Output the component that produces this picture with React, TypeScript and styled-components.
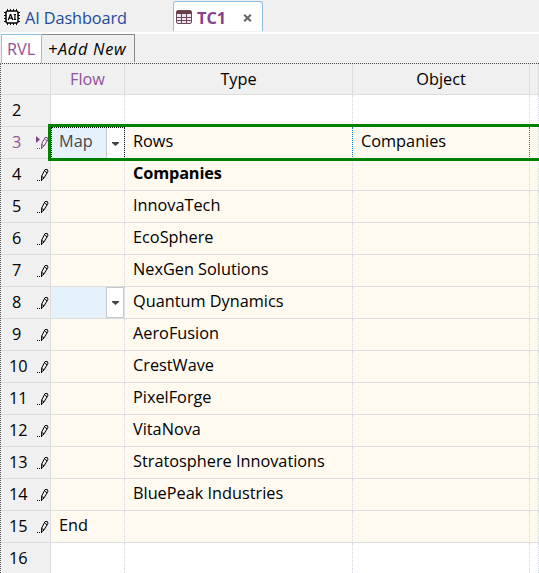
import React from 'react';
import styled, { createGlobalStyle, css } from 'styled-components';

const Global = createGlobalStyle`
  * { box-sizing: border-box; }
  html, body { margin: 0; overflow: hidden; }
  body { background: #f0f0f0; color: #000; font: 16.3px/22px "Open Sans", "Noto Sans", sans-serif; }
`;

const Window = styled.div`
  width: 539px;
  height: 573px;
  overflow: hidden;
  display: flex;
  flex-direction: column;
  white-space: nowrap;
`;

const DocumentTabs = styled.div`
  display: flex;
  height: 34px;
  flex: none;
  border-bottom: 2px solid #fff;
`;

const DashboardTab = styled.div`
  display: flex;
  width: 173px;
  padding: 7px 0 0 4px;
  gap: 5px;
  color: #244a9b;
  svg { flex: none; background: #fff; margin-top: 2px; }
`;

const ActiveTab = styled.div`
  display: flex;
  width: 90px;
  height: 30px;
  margin-top: 1px;
  padding: 5px 0 0 2px;
  background: #fff;
  border: 1px solid #8fbfe0;
  border-bottom: 0;
  border-radius: 3px 3px 0 0;
  color: #84418c;
  font-weight: 700;
  > svg { flex: none; margin-top: 3px; }
`;

const Label = styled.span<{ $spacing?: number }>`
  letter-spacing: ${p => p.$spacing ?? 0}px;
`;

const SheetTabs = styled.div`
  display: flex;
  height: 29px;
  flex: none;
  padding-left: 1px;
`;

const SheetTab = styled.div<{ $selected?: boolean }>`
  height: 29px;
  padding: 3px 0 0 5px;
  ${p => p.$selected
    ? css`width: 41px; background: #fff; color: #91539a; border: 1px solid #8fc3e4; border-bottom: 0;`
    : css`width: 93px; height: 28px; color: #000; font-style: italic; border: solid #888; border-width: 1px 1px 0 0; padding-left: 6px;`}
`;

const Grid = styled.div`
  position: relative;
  flex: 1;
  border-top: 1px dotted #444;
  border-left: 1px dotted #555;
`;

const Row = styled.div<{ $header?: boolean; $filled?: boolean }>`
  display: grid;
  grid-template-columns: 50px 74px 228px 177px 9px;
  height: ${p => (p.$header ? 31 : 32)}px;
  background: ${p => (p.$header ? '#f0f0f0' : p.$filled ? '#fffaf0' : '#fff')};
`;

const Cell = styled.div<{ $header?: boolean; $active?: boolean; $bold?: boolean }>`
  display: flex;
  border-bottom: 1px solid #dcdcdc;
  border-right: 1px ${p => (p.$header ? 'solid #dcdcdc' : p.$active ? 'dotted #0878d0' : 'dotted #d0d4df')};
  padding: ${p => (p.$header ? '4px 0 0' : '3px 0 0 8px')};
  justify-content: ${p => (p.$header ? 'center' : 'flex-start')};
  font-weight: ${p => (p.$bold ? 700 : 400)};
  letter-spacing: ${p => (p.$bold ? -0.15 : 0)}px;
`;

const FlowTitle = styled.span`color: #91539a;`;

const Gutter = styled.div<{ $current?: boolean }>`
  display: flex;
  background: #f0f0f0;
  border-right: 1px solid #dcdcdc;
  border-bottom: 1px solid #dcdcdc;
  padding-top: 4px;
  color: ${p => (p.$current ? '#91539a' : '#000')};
  svg { flex: none; margin-top: 5px; }
`;

const RowNumber = styled.span<{ $wide: boolean }>`
  width: 34px;
  flex: none;
  padding-left: ${p => (p.$wide ? 8 : 11)}px;
`;

const FlowEditor = styled.div<{ $focused?: boolean }>`
  display: flex;
  justify-content: space-between;
  background: #e5f1fb;
  border-right: 1px dotted #d0d4df;
  border-bottom: 1px solid #dcdcdc;
  color: #484848;
  padding-left: 8px;
  line-height: 30px;
  ${p => p.$focused && css`
    border: 1px dotted #111;
    padding-left: 7px;
    line-height: 26px;
  `}
`;

const DropButton = styled.div<{ $focused?: boolean }>`
  display: flex;
  align-items: center;
  justify-content: center;
  width: 18px;
  height: ${p => (p.$focused ? 30 : 31)}px;
  background: #fff;
  border: 1px solid #c8c8c8;
  ${p => p.$focused && css`border-width: 0 0 0 1px;`}
  svg { margin: 2px 0 0 1px; }
`;

const Selection = styled.div`
  position: absolute;
  left: 47px;
  top: 60px;
  width: 510px;
  height: 37px;
  border: 3px solid #008000;
  pointer-events: none;
`;

const ChipIcon = () => (
  <svg width="16" height="16" viewBox="0 0 16 16">
    <path d="M3.5 0v16M6.5 0v16M9.5 0v16M12.5 0v16M0 3.5h16M0 6.5h16M0 9.5h16M0 12.5h16" stroke="#000" strokeWidth="1" />
    <rect x="2" y="2" width="12" height="12" rx="1.5" fill="#fff" stroke="#000" strokeWidth="1.5" />
    <path d="m4.3 11 2-5.5h.5l2 5.5M5 9.2h3M9.7 5.5h2.3m-1.1 0v5m-1.2 0h2.3" fill="none" stroke="#000" strokeWidth="1.2" />
  </svg>
);

const TableIcon = () => (
  <svg width="16" height="14" viewBox="0 0 16 14">
    <rect x=".5" y=".5" width="15" height="13" rx="1.5" fill="#eee4f6" stroke="#6b4b52" />
    <path d="M1 1h14v3H1z" fill="#6b4148" />
    <path d="M5.5 4v9M10.5 4v9M1 7.5h14M1 10.5h14" stroke="#6b4b52" />
  </svg>
);

const CloseIcon = () => (
  <svg width="10" height="9" viewBox="0 0 10 9">
    <path d="m1.2 .8 6.6 6.4m0-6.4-6.6 6.4" stroke="#666" strokeWidth="2.1" />
  </svg>
);

const PencilIcon = ({ current = false }: { current?: boolean }) => (
  <svg width="14" height="14" viewBox="0 0 14 14" fill="none" stroke={current ? '#84418c' : '#000'}>
    {current && <path d="M1 0v7l4-3.5z" fill="#84418c" stroke="none" />}
    <path d="m6.5 12 .2-4 3.3-6.5h2.3l.7 1.8-4 6.7zM7 8.5l2 1.5M9.7 3.2l2.6 1.6" strokeWidth="1" />
    <path d="M2 12.5h1m1 0h1m1 0h1" />
  </svg>
);

const Arrow = () => (
  <svg width="8" height="5" viewBox="0 0 8 5"><path d="M0 0h7v1L3.5 4 0 1z" fill="#444" /></svg>
);

type Data = { n: number; flow?: string; type?: string; object?: string };

const rows: Data[] = [
  { n: 2 },
  { n: 3, flow: 'Map', type: 'Rows', object: 'Companies' },
  { n: 4, type: 'Companies' },
  { n: 5, type: 'InnovaTech' },
  { n: 6, type: 'EcoSphere' },
  { n: 7, type: 'NexGen Solutions' },
  { n: 8, type: 'Quantum Dynamics' },
  { n: 9, type: 'AeroFusion' },
  { n: 10, type: 'CrestWave' },
  { n: 11, type: 'PixelForge' },
  { n: 12, type: 'VitaNova' },
  { n: 13, type: 'Stratosphere Innovations' },
  { n: 14, type: 'BluePeak Industries' },
  { n: 15, flow: 'End' },
  { n: 16 },
];

const CloseSlot = styled.span`
  display: flex;
  padding: 7px 0 0 15px;
`;

const TabTitle = styled(Label)`
  width: 33px;
  margin-left: 5px;
  margin-right: -2px;
`;

export default function App() {
  return (
    <Window>
      <Global />
      <DocumentTabs>
        <DashboardTab><ChipIcon /><Label $spacing={-0.1}>AI Dashboard</Label></DashboardTab>
        <ActiveTab>
          <TableIcon /><TabTitle>TC1</TabTitle>
          <CloseSlot><CloseIcon /></CloseSlot>
        </ActiveTab>
      </DocumentTabs>
      <SheetTabs>
        <SheetTab $selected><Label>RVL</Label></SheetTab>
        <SheetTab><Label $spacing={0.7}>+Add New</Label></SheetTab>
      </SheetTabs>
      <Grid>
        <Row $header>
          <Gutter />
          <Cell $header><FlowTitle>Flow</FlowTitle></Cell>
          <Cell $header>Type</Cell>
          <Cell $header>Object</Cell>
          <Cell $header />
        </Row>
        {rows.map(({ n, flow, type, object }) => {
          const filled = n > 2 && n < 16;
          const current = n === 3;
          return (
            <Row key={n} $filled={filled}>
              <Gutter $current={current}>
                <RowNumber $wide={n > 9}>{n}</RowNumber>
                {filled && <PencilIcon current={current} />}
              </Gutter>
              {current || n === 8 ? (
                <FlowEditor $focused={current}>
                  <span>{flow}</span>
                  <DropButton $focused={current}><Arrow /></DropButton>
                </FlowEditor>
              ) : <Cell>{flow}</Cell>}
              <Cell $active={current} $bold={n === 4}>{type}</Cell>
              <Cell $active={current}>{object}</Cell>
              <Cell />
            </Row>
          );
        })}
        <Selection />
      </Grid>
    </Window>
  );
}
